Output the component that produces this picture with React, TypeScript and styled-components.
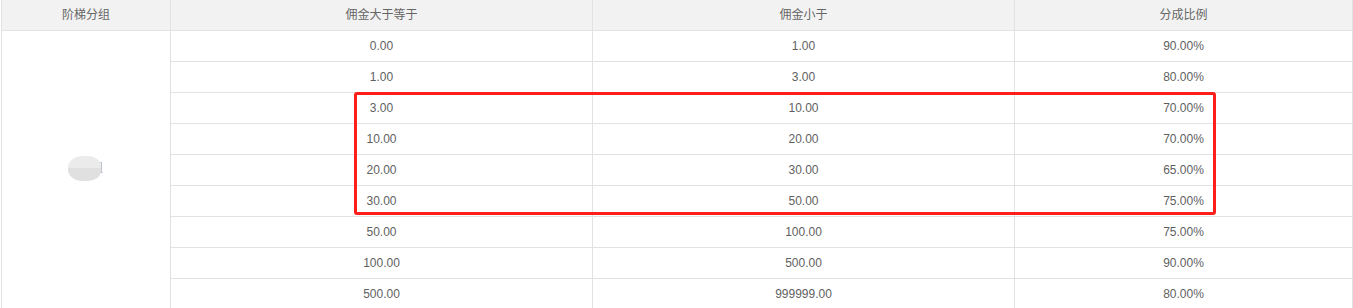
import React from 'react'
import styled, { createGlobalStyle } from 'styled-components'

const GlobalStyle = createGlobalStyle`
  html, body {
    margin: 0;
    padding: 0;
    background: #fff;
  }
  body {
    font-family: "Liberation Sans", "Noto Sans CJK SC", Arial, sans-serif;
    font-size: 12px;
    color: #666;
  }
`;

const rows = [
  ['0.00', '1.00', '90.00%'],
  ['1.00', '3.00', '80.00%'],
  ['3.00', '10.00', '70.00%'],
  ['10.00', '20.00', '70.00%'],
  ['20.00', '30.00', '65.00%'],
  ['30.00', '50.00', '75.00%'],
  ['50.00', '100.00', '75.00%'],
  ['100.00', '500.00', '90.00%'],
  ['500.00', '999999.00', '80.00%'],
];

const App = () => {
  return (
    <Wrapper>
      <GlobalStyle />
      <Table>
        <colgroup>
          <col style={{ width: 169 }} />
          <col style={{ width: 422 }} />
          <col style={{ width: 422 }} />
          <col />
        </colgroup>
        <thead>
          <tr>
            <Th>阶梯分组</Th>
            <Th>佣金大于等于</Th>
            <Th>佣金小于</Th>
            <Th>分成比例</Th>
          </tr>
        </thead>
        <tbody>
          {rows.map((r, i) => (
            <tr key={i}>
              {i === 0 && (
                <GroupCell rowSpan={rows.length}>
                  <GroupName>
                    <span className="name">组</span>
                    <Blob />
                  </GroupName>
                </GroupCell>
              )}
              <Td>{r[0]}</Td>
              <Td>{r[1]}</Td>
              <Td>{r[2]}</Td>
            </tr>
          ))}
        </tbody>
      </Table>
      <Highlight />
    </Wrapper>
  );
};

export default App;

const Wrapper = styled.div`
  position: relative;
  width: 1353px;
  height: 308px;
  overflow: hidden;
`;

const Table = styled.table`
  margin-left: 1px;
  width: 1352px;
  border-collapse: collapse;
  table-layout: fixed;
`;

const Th = styled.th`
  height: 30px;
  padding: 0;
  background-color: #f2f2f2;
  border: 1px solid #e2e2e2;
  border-top: none;
  font-weight: normal;
  color: #666;
  text-align: center;
  line-height: 30px;
`;

const Td = styled.td`
  height: 30px;
  padding: 0;
  border: 1px solid #e2e2e2;
  color: #5f5f5f;
  text-align: center;
  line-height: 30px;
`;

const GroupCell = styled.td`
  padding: 0;
  border: 1px solid #e2e2e2;
  text-align: center;
  vertical-align: middle;
`;

const GroupName = styled.div`
  position: relative;
  display: inline-block;
  width: 36px;
  height: 26px;
  margin-left: -1px;
  & > .name {
    position: absolute;
    right: 0;
    top: 5px;
    font-size: 12px;
    line-height: 14px;
    color: #7a8aa0;
    opacity: 0.55;
  }
`;

const Blob = styled.div`
  position: absolute;
  left: 0;
  top: 0;
  width: 33px;
  height: 25px;
  border-radius: 45% 40% 40% 45%;
  background: linear-gradient(180deg, #ebebeb 0%, #ebebeb 50%, #e0e0e0 50%, #e0e0e0 100%);
  filter: blur(0.5px);
`;

const Highlight = styled.div`
  position: absolute;
  left: 354px;
  top: 92px;
  width: 856px;
  height: 117px;
  border: 3px solid #ff1f1a;
  border-radius: 3px;
  pointer-events: none;
`;
